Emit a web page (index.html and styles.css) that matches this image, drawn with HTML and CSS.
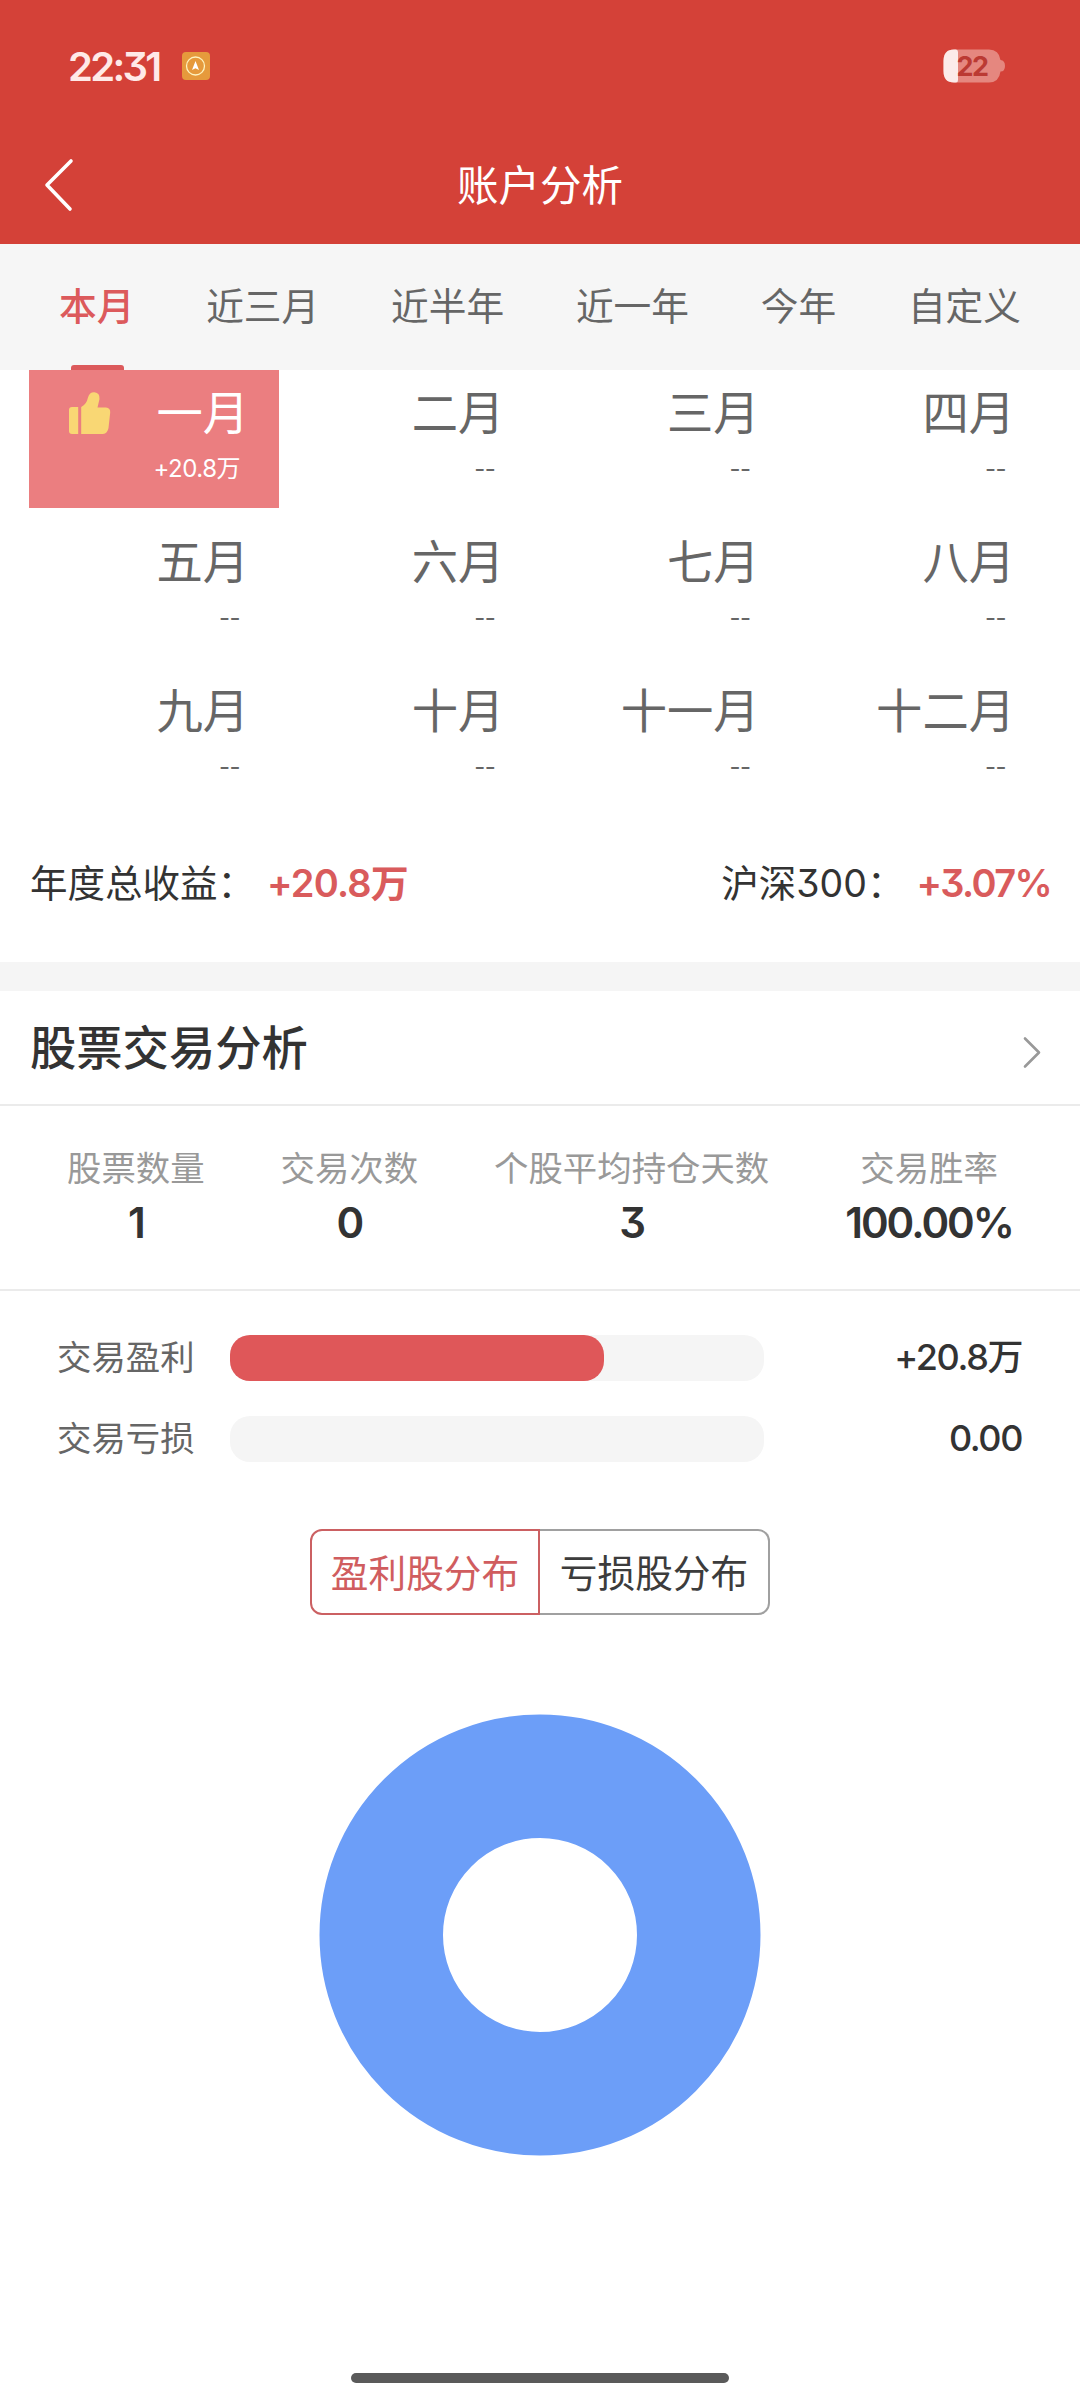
FILE: index.html
```html
<!DOCTYPE html>
<html lang="zh-CN">

<head>
    <meta charset="UTF-8">
    <meta name="viewport" content="width=device-width, initial-scale=1.0">
    <title>账户分析</title>
    <link rel="stylesheet" href="styles.css">
</head>

<body>
    <header class="header">
        <div class="status-bar">
            <span class="time">22:31</span>
            <svg class="status-icon" width="28" height="28" viewBox="0 0 28 28">
                <rect width="28" height="28" rx="4" fill="#e69a3c" />
                <circle cx="13.5" cy="14" r="9" fill="none" stroke="#fdf3c0" stroke-width="1.3" />
                <path d="M13.5 9l3.5 9-3.5-1.8L10 18z" fill="#fff" />
            </svg>
            <svg class="battery" width="63" height="34" viewBox="0 0 63 34">
                <path d="M11 0.5H46Q56 0.5 57.5 11Q62 11.5 62 17T57.5 22.5Q56 33.5 46 33.5H11Q0.5 33.5 0.5 22V12Q0.5 0.5 11 0.5Z" fill="#e5877f" />
                <path d="M11 0.5H13Q15 0.5 15 3V31Q15 33.5 13 33.5H11Q0.5 33.5 0.5 22V12Q0.5 0.5 11 0.5Z" fill="#fcebea" />
                <text class="battery-text" x="13.5" y="27">22</text>
            </svg>
        </div>
        <div class="nav-bar">
            <svg class="back" width="32" height="56" viewBox="0 0 32 56">
                <path d="M28 4L4 28l23 24" fill="none" stroke="#fff" stroke-width="3.6" stroke-linecap="round" stroke-linejoin="round" />
            </svg>
            <h1>账户分析</h1>
        </div>
    </header>

    <nav class="tabs">
        <a class="tab active">本月</a>
        <a class="tab">近三月</a>
        <a class="tab">近半年</a>
        <a class="tab">近一年</a>
        <a class="tab">今年</a>
        <a class="tab">自定义</a>
    </nav>

    <div class="months">
        <div class="month best">
            <svg class="thumb" width="42" height="42" viewBox="0 0 42 42">
                <path d="M3 15H9.2V42H3Q0 42 0 39V18Q0 15 3 15Z" />
                <path d="M12.2 15Q17.5 12.5 19 5.5Q20.5 0 25.5 0.3Q31 1 30.5 7L28.5 15.5H37Q41.5 16 41.2 20.5L39.5 36Q38.5 41.5 34 42H12.2Z" />
            </svg>
            <div class="name">一月</div>
            <div class="profit">+20.8万</div>
        </div>
        <div class="month"><div class="name">二月</div><div class="profit">--</div></div>
        <div class="month"><div class="name">三月</div><div class="profit">--</div></div>
        <div class="month"><div class="name">四月</div><div class="profit">--</div></div>
        <div class="month"><div class="name">五月</div><div class="profit">--</div></div>
        <div class="month"><div class="name">六月</div><div class="profit">--</div></div>
        <div class="month"><div class="name">七月</div><div class="profit">--</div></div>
        <div class="month"><div class="name">八月</div><div class="profit">--</div></div>
        <div class="month"><div class="name">九月</div><div class="profit">--</div></div>
        <div class="month"><div class="name">十月</div><div class="profit">--</div></div>
        <div class="month"><div class="name">十一月</div><div class="profit">--</div></div>
        <div class="month"><div class="name">十二月</div><div class="profit">--</div></div>
    </div>

    <div class="summary">
        <div>年度总收益：<span class="gain">+20.8万</span></div>
        <div>沪深300：<span class="gain index-gain">+3.07%</span></div>
    </div>

    <section class="analysis">
        <div class="section-title">
            <h2>股票交易分析</h2>
            <svg class="more" width="20" height="34" viewBox="0 0 20 34">
                <path d="M3 3.5L17 17.5L3 31.5" fill="none" stroke="#999" stroke-width="2.6" stroke-linecap="round" stroke-linejoin="round" />
            </svg>
        </div>

        <div class="stats">
            <div class="stat">
                <div class="label">股票数量</div>
                <div class="value">1</div>
            </div>
            <div class="stat">
                <div class="label">交易次数</div>
                <div class="value">0</div>
            </div>
            <div class="stat">
                <div class="label">个股平均持仓天数</div>
                <div class="value">3</div>
            </div>
            <div class="stat">
                <div class="label">交易胜率</div>
                <div class="value">100.00%</div>
            </div>
        </div>

        <div class="bars">
            <div class="bar-row">
                <span class="bar-label">交易盈利</span>
                <div class="bar"><div class="fill" style="width: 70%"></div></div>
                <span class="bar-value">+20.8万</span>
            </div>
            <div class="bar-row">
                <span class="bar-label">交易亏损</span>
                <div class="bar"></div>
                <span class="bar-value">0.00</span>
            </div>
        </div>

        <div class="switch">
            <button class="selected">盈利股分布</button>
            <button>亏损股分布</button>
        </div>

        <svg class="donut" width="442" height="442" viewBox="0 0 442 442">
            <circle cx="221" cy="221" r="158.75" fill="none" stroke="#6c9ef8" stroke-width="123.5" />
        </svg>
    </section>

    <div class="home-indicator"></div>
</body>

</html>
```

FILE: styles.css
```css
* {
    margin: 0;
    padding: 0;
    box-sizing: border-box;
}

body {
    display: flex;
    flex-direction: column;
    width: 1080px;
    height: 2400px;
    background: #fff;
    color: #333;
    font-family: Inter, "Noto Sans CJK SC", sans-serif;
    font-feature-settings: "cv09";
}

/* header */
.header {
    height: 244px;
    background: #d44138;
    color: #fff;
}

.status-bar {
    display: flex;
    align-items: center;
    height: 126px;
    padding: 6px 74px 0 68px;
}

.time {
    width: 114px;
    font-size: 40px;
    font-weight: 600;
    letter-spacing: -2.7px;
    color: #ffe9e7;
}

.battery {
    margin-left: auto;
}

.battery-text {
    font-size: 27px;
    font-weight: 700;
    letter-spacing: -1.5px;
    fill: #bb3a33;
}

.nav-bar {
    display: grid;
    grid-template-columns: 120px 1fr 120px;
    align-items: center;
    height: 118px;
}

.back {
    margin-left: 43px;
}

h1 {
    padding-bottom: 4px;
    font-size: 41.5px;
    font-weight: 400;
    text-align: center;
}

/* period tabs */
.tabs {
    display: flex;
    justify-content: space-between;
    height: 126px;
    padding: 0 59px;
    background: #f6f6f6;
}

.tab {
    position: relative;
    font-size: 37.7px;
    line-height: 125px;
    color: #666;
}

.tab.active {
    color: #dc5a5c;
    font-weight: 500;
}

.tab.active::after {
    content: "";
    position: absolute;
    left: 12px;
    bottom: 0;
    width: 53px;
    height: 5px;
    border-radius: 3px 3px 0 0;
    background: #dc5a5c;
}

/* months */
.months {
    display: grid;
    grid-template-columns: repeat(4, 250px);
    justify-content: space-between;
    row-gap: 11px;
    padding: 0 35px 0 29px;
}

.month {
    position: relative;
    height: 138px;
    padding: 13px 30px 0 0;
    text-align: right;
    color: #666;
}

.month.best {
    background: #eb7e80;
    color: #fff;
}

.thumb {
    position: absolute;
    left: 40px;
    top: 22px;
    fill: #f9d774;
}

.name {
    font-size: 46.3px;
    line-height: 60px;
}

.profit {
    margin-top: 8px;
    padding-right: 9px;
    font-size: 24px;
    line-height: 36px;
    letter-spacing: -0.5px;
}

.summary {
    display: flex;
    justify-content: space-between;
    height: 156px;
    padding: 0 29px 0 30px;
    font-size: 37.5px;
    line-height: 155px;
}

.gain {
    margin-left: 12px;
    font-size: 38px;
    font-weight: 600;
    letter-spacing: -0.8px;
    color: #d95b5c;
}

.index-gain {
    letter-spacing: -1.6px;
}

/* stock trade analysis */
.analysis {
    display: flex;
    flex-direction: column;
    border-top: 29px solid #f5f5f5;
}

.section-title {
    display: flex;
    align-items: center;
    justify-content: space-between;
    height: 115px;
    padding: 0 38px 0 30px;
    border-bottom: 2px solid #ebebeb;
}

h2 {
    padding-bottom: 6px;
    font-size: 46.3px;
    font-weight: 500;
}

.more {
    margin-top: 8px;
}

.stats {
    display: flex;
    justify-content: space-between;
    height: 185px;
    padding: 38px 67px 0;
    border-bottom: 2px solid #ebebeb;
    text-align: center;
}

.label {
    font-size: 34.4px;
    line-height: 50px;
    color: #999;
}

.value {
    font-size: 42px;
    font-weight: 600;
    line-height: 58px;
    letter-spacing: -2px;
}

.bars {
    display: flex;
    flex-direction: column;
    gap: 35px;
    padding: 44px 58px 0 57px;
}

.bar-row {
    display: grid;
    grid-template-columns: 173px 534px 1fr;
    height: 46px;
    line-height: 45px;
}

.bar-label {
    font-size: 34.4px;
    color: #666;
}

.bar {
    border-radius: 20px;
    background: #f5f5f5;
}

.fill {
    height: 100%;
    border-radius: 20px;
    background: #df5759;
}

.bar-value {
    font-size: 36px;
    font-weight: 500;
    letter-spacing: -1.4px;
    text-align: right;
}

.switch {
    display: flex;
    align-self: center;
    margin-top: 67px;
}

.switch button {
    width: 230px;
    height: 86px;
    padding-bottom: 3px;
    border: 2px solid #a0a0a0;
    border-left: none;
    border-radius: 0 12px 12px 0;
    background: #fff;
    color: #3c3c3c;
    font-family: inherit;
    font-size: 37.7px;
}

.switch .selected {
    border: 2px solid #cb6062;
    border-radius: 12px 0 0 12px;
    color: #d05d5f;
}

.donut {
    align-self: center;
    margin-top: 99px;
}

.home-indicator {
    align-self: center;
    width: 378px;
    height: 10px;
    margin: auto 0 17px;
    border-radius: 5px;
    background: #5a5a5a;
}
```
